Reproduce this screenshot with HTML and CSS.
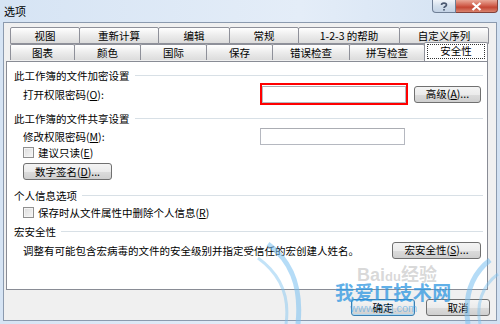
FILE: index.html
```html
<!DOCTYPE html>
<html lang="zh-CN">
<head>
    <meta charset="UTF-8">
    <title>选项</title>
    <link rel="stylesheet" href="styles.css">
</head>
<body>
  <div class="window">
    <div class="titlebar">
      <span class="title">选项</span>
      <div class="caption">
        <div class="cap-help">
          <svg width="8" height="9" viewBox="0 0 8 9"><path d="M1.5 3 C1.5 0.5 6.5 0.5 6.5 3 C6.5 4.5 4 4.5 4 6" fill="none" stroke="#4a5870" stroke-width="1.6"/><rect x="3.2" y="7" width="1.6" height="1.6" fill="#4a5870"/></svg>
        </div>
        <div class="cap-close">
          <svg width="11" height="9" viewBox="0 0 11 9"><path d="M1.5 1 L9.5 8 M9.5 1 L1.5 8" stroke="#fff" stroke-width="2.2"/></svg>
        </div>
      </div>
    </div>

    <div class="client">
      <div class="tabs">
        <div class="tab-row back">
          <div class="tab">视图</div>
          <div class="tab">重新计算</div>
          <div class="tab">编辑</div>
          <div class="tab">常规</div>
          <div class="tab">1-2-3 的帮助</div>
          <div class="tab">自定义序列</div>
        </div>
        <div class="tab-row front">
          <div class="tab">图表</div>
          <div class="tab">颜色</div>
          <div class="tab">国际</div>
          <div class="tab">保存</div>
          <div class="tab">错误检查</div>
          <div class="tab">拼写检查</div>
          <div class="tab selected"><span class="focus">安全性</span></div>
        </div>
      </div>

      <div class="panel">
        <div class="group-title g1"><span>此工作簿的文件加密设置</span><i></i></div>
        <div class="field open-row">
          <span class="label">打开权限密码(<u>O</u>):</span>
          <div class="highlight"><div class="textbox"></div></div>
          <button class="btn adv">高级(<u>A</u>)...</button>
        </div>

        <div class="group-title g2"><span>此工作簿的文件共享设置</span><i></i></div>
        <div class="field modify-row">
          <span class="label">修改权限密码(<u>M</u>):</span>
          <div class="textbox"></div>
        </div>
        <div class="check check1"><span class="box"></span>建议只读(<u>E</u>)</div>
        <button class="btn sign">数字签名(<u>D</u>)...</button>

        <div class="group-title g3"><span>个人信息选项</span><i></i></div>
        <div class="check check2"><span class="box"></span>保存时从文件属性中删除个人信息(<u>R</u>)</div>

        <div class="group-title g4"><span>宏安全性</span><i></i></div>
        <div class="macro-row">
          <span>调整有可能包含宏病毒的文件的安全级别并指定受信任的宏创建人姓名。</span>
          <button class="btn macro">宏安全性(<u>S</u>)...</button>
        </div>
      </div>

      <div class="actions">
        <button class="btn ok">确定</button>
        <button class="btn cancel">取消</button>
      </div>
    </div>

    <!-- watermark laid over the dialog -->
    <div class="watermark">
      <svg class="wings" width="250" height="84" viewBox="0 0 250 84">
        <path d="M18 4 C40 20 52 44 48 84" fill="none" stroke="#79c0f0" stroke-width="5" opacity="0.55"/>
        <path d="M8 18 C30 34 40 56 36 84" fill="none" stroke="#79c0f0" stroke-width="3" opacity="0.45"/>
        <path d="M240 20 C222 34 214 56 218 84" fill="none" stroke="#79c0f0" stroke-width="5" opacity="0.55"/>
        <path d="M248 34 C232 46 226 64 230 84" fill="none" stroke="#79c0f0" stroke-width="3" opacity="0.45"/>
      </svg>
      <span class="wm-baidu">Bai<b>du</b>经验</span>
      <span class="wm-main">我爱IT技术网</span>
      <span class="wm-url">www.52ij.com</span>
    </div>
  </div>
</body>
</html>
```

FILE: styles.css
```css
* {
  box-sizing: border-box;
}

body {
  margin: 0;
  width: 500px;
  height: 324px;
  overflow: hidden;
  font-family: "Noto Sans CJK SC", "Liberation Sans", sans-serif;
  font-size: 10.5px;
  color: #000;
}

.window {
  position: relative;
  width: 500px;
  height: 324px;
  display: flex;
  flex-direction: column;
  background: linear-gradient(90deg, #d6e4f4, #e4edf8 60%, #d2e1f2);
}

/* title bar */
.titlebar {
  height: 22px;
  display: flex;
  justify-content: space-between;
  align-items: flex-start;
}

.title {
  padding: 3px 0 0 4px;
  font-size: 11px;
  line-height: 16px;
}

.caption {
  display: flex;
  margin-right: 2px;
}

.cap-help,
.cap-close {
  height: 13px;
  display: flex;
  align-items: center;
  justify-content: center;
  border: 1px solid #6f7f96;
  border-top: none;
}

.cap-help {
  width: 24px;
  border-radius: 0 0 0 4px;
  background: linear-gradient(#f1f5fa, #d3dfec 50%, #c4d3e6);
}

.cap-close {
  width: 42px;
  border-color: #83413a;
  border-left: none;
  border-radius: 0 0 4px 0;
  background: linear-gradient(#e9a898, #cf5a48 50%, #c44634 60%, #d9836e);
}

/* client area */
.client {
  flex: 1;
  margin: 0 3px 3px 3px;
  border: 1px solid #8b9aae;
  background: #f0f0f0;
  padding: 4px 6px 0 4px;
  display: flex;
  flex-direction: column;
}

.tabs {
  margin-left: 2px;
}

.tab-row {
  display: flex;
  align-items: flex-start;
}

.tab {
  height: 17px;
  margin-left: -1px;
  border: 1px solid #8e9099;
  border-radius: 2px 2px 0 0;
  background: linear-gradient(#ffffff, #ececec 50%, #dcdcdc);
  text-align: center;
  line-height: 15px;
  white-space: nowrap;
}

.tab:first-child {
  margin-left: 0;
}

.back .tab:nth-child(1) { width: 70px; }
.back .tab:nth-child(2) { width: 80px; }
.back .tab:nth-child(3) { width: 72px; }
.back .tab:nth-child(4) { width: 70px; }
.back .tab:nth-child(5) { width: 102px; }
.back .tab:nth-child(6) { width: 90px; }

.front .tab {
  height: 16px;
  border-bottom: none;
  line-height: 16px;
}

.front .tab:nth-child(1) { width: 65px; }
.front .tab:nth-child(2) { width: 67px; }
.front .tab:nth-child(3) { width: 67px; }
.front .tab:nth-child(4) { width: 67px; }
.front .tab:nth-child(5) { width: 78px; }
.front .tab:nth-child(6) { width: 76px; }

.front .tab.selected {
  position: relative;
  z-index: 1;
  width: 64px;
  height: 19px;
  margin-top: -2px;
  background: #fff;
  padding-top: 2px;
}

.focus {
  display: block;
  margin: 0 3px;
  height: 13px;
  line-height: 12px;
  outline: 1px dotted #333;
}

/* white page */
.panel {
  height: 229px;
  margin-right: 0;
  margin-left: -2px;
  width: 482px;
  border: 1px solid #898c95;
  background: #fff;
  display: flex;
  flex-direction: column;
  align-items: flex-start;
}

.group-title {
  width: 100%;
  height: 16px;
  display: flex;
  align-items: center;
  padding: 0 4px 0 7px;
}

.group-title i {
  flex: 1;
  height: 1px;
  margin-left: 5px;
  background: #d8e0e6;
}

.g1 { margin-top: 5px; }
.g2 { margin-top: 5px; }
.g3 { margin-top: 7px; }
.g4 { margin-top: 4px; }

.field {
  display: flex;
  align-items: center;
  margin-left: 16px;
}

.label {
  width: 237px;
}

.open-row {
  height: 22px;
}

.modify-row {
  height: 18px;
  margin-top: 1px;
}

.highlight {
  border: 2px solid #f00;
  padding-top: 1px;
}

.textbox {
  width: 144px;
  height: 17px;
  border: 1px solid #b5b8c0;
  border-top-color: #abadb3;
  background: #fff;
}

.modify-row .textbox {
  width: 145px;
}

.btn {
  font: inherit;
  color: #000;
  height: 17px;
  padding: 0;
  line-height: 14px;
  border: 1px solid #707070;
  border-radius: 3px;
  background: linear-gradient(#f4f4f4, #ebebeb 50%, #dcdcdc 51%, #cfcfcf);
}

.adv {
  width: 67px;
  margin-left: 6px;
}

.check {
  display: flex;
  align-items: center;
  margin-left: 16px;
  height: 13px;
  margin-top: 1px;
}

.box {
  width: 11px;
  height: 11px;
  margin-right: 4px;
  border: 1px solid #8f8f8f;
  background: linear-gradient(135deg, #dcdcdc, #f6f6f6);
  box-shadow: inset 0 0 0 1px #f4f4f4;
}

.check2 {
  margin-top: 2px;
  height: 14px;
}

.sign {
  width: 89px;
  margin: 4px 0 0 16px;
}

.macro-row {
  width: 100%;
  height: 18px;
  margin-top: 2px;
  padding: 0 6px 0 16px;
  display: flex;
  align-items: center;
  justify-content: space-between;
}

.macro {
  width: 89px;
}

/* OK / Cancel */
.actions {
  display: flex;
  justify-content: flex-end;
  gap: 11px;
  margin-top: 9px;
  margin-right: 0;
}

.ok,
.cancel {
  width: 64px;
}

.ok {
  border-color: #3c7fb1;
  box-shadow: inset 0 0 0 1px #a8d8f3;
}

/* watermark */
.watermark {
  position: absolute;
  left: 250px;
  top: 240px;
  width: 250px;
  height: 84px;
  pointer-events: none;
}

.wings {
  position: absolute;
  left: 0;
  top: 0;
}

.wm-baidu {
  position: absolute;
  left: 107px;
  top: 20px;
  font-family: "Liberation Sans", "Noto Sans CJK SC", sans-serif;
  font-size: 18px;
  font-weight: bold;
  color: rgba(170, 170, 170, 0.45);
}

.wm-baidu b {
  font-size: 13px;
}

.wm-main {
  position: absolute;
  left: 85px;
  top: 38px;
  font-size: 19px;
  font-weight: bold;
  letter-spacing: 0.5px;
  color: rgba(45, 150, 225, 0.75);
}

.wm-url {
  position: absolute;
  left: 100px;
  top: 62px;
  font-family: "Liberation Sans", sans-serif;
  font-size: 11px;
  color: rgba(60, 160, 230, 0.55);
}
```
